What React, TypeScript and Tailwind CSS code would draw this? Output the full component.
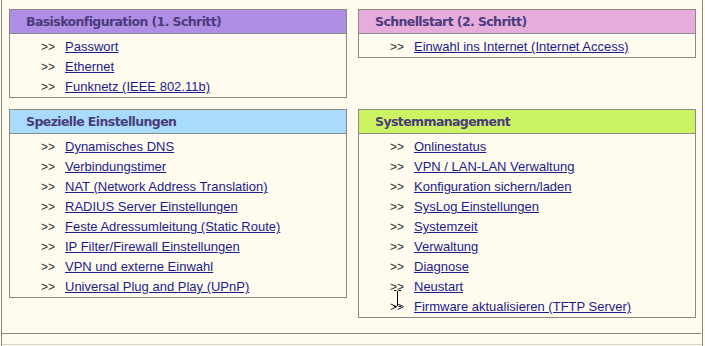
const sections = [
  {
    title: "Basiskonfiguration (1. Schritt)",
    head: "bg-[#b18ee6]",
    links: ["Passwort", "Ethernet", "Funknetz (IEEE 802.11b)"],
  },
  {
    title: "Schnellstart (2. Schritt)",
    head: "bg-[#e6acdc]",
    links: ["Einwahl ins Internet (Internet Access)"],
  },
  {
    title: "Spezielle Einstellungen",
    head: "bg-[#a8dcfa]",
    links: [
      "Dynamisches DNS",
      "Verbindungstimer",
      "NAT (Network Address Translation)",
      "RADIUS Server Einstellungen",
      "Feste Adressumleitung (Static Route)",
      "IP Filter/Firewall Einstellungen",
      "VPN und externe Einwahl",
      "Universal Plug and Play (UPnP)",
    ],
  },
  {
    title: "Systemmanagement",
    head: "bg-[#ccf462]",
    links: [
      "Onlinestatus",
      "VPN / LAN-LAN Verwaltung",
      "Konfiguration sichern/laden",
      "SysLog Einstellungen",
      "Systemzeit",
      "Verwaltung",
      "Diagnose",
      "Neustart",
      "Firmware aktualisieren (TFTP Server)",
    ],
  },
];

function Box({ title, head, links }: { title: string; head: string; links: string[] }) {
  return (
    <div className="border border-[#8c8a80] bg-[#fffbef] self-start">
      <div
        className={`${head} h-[24px] border-b border-[#8c8a80] pl-[16px] pt-[1px] flex items-center text-[12.5px] font-bold tracking-[-0.6px] text-[#4a3c7c] shadow-[0_1px_0_#ffffff]`}
        style={{ fontFamily: '"DejaVu Sans", Verdana, sans-serif' }}
      >
        {title}
      </div>
      <ul className="pt-[3px]">
        {links.map((l) => (
          <li key={l} className="h-[20px] flex items-center pl-[31px]">
            <span className="w-[24px] text-[12px] text-[#333333]">&gt;&gt;</span>
            <a href="#" className="text-[13px] text-[#1c1c8c] underline">
              {l}
            </a>
          </li>
        ))}
      </ul>
    </div>
  );
}

export default function App() {
  return (
    <div
      className="relative w-[705px] h-[346px] bg-[#fffbef] overflow-hidden"
      style={{ fontFamily: '"Liberation Sans", Arial, sans-serif' }}
    >
      <div className="ml-[1px] mr-[2px] h-full border-l border-r border-[#8c8a80] flex flex-col">
        <div className="grid grid-cols-[338px_338px] content-start gap-x-[11px] gap-y-[11px] pl-[7px] pt-[9px] h-[333px] shrink-0 items-start">
          {sections.map((s) => (
            <Box key={s.title} {...s} />
          ))}
        </div>
        <div className="border-t border-[#8c8a80] mr-[1px] h-[11px] shrink-0" />
        <div className="border-t border-[#d8d4c8] flex-1" />
      </div>
      {/* text cursor */}
      <svg className="absolute left-[394px] top-[290px]" width="7" height="17" viewBox="0 0 7 17">
        <path d="M0 0.5h2.5M4.5 0.5H7M3.5 1v15M0 16.5h2.5M4.5 16.5H7" stroke="#000" strokeWidth="1" fill="none" />
      </svg>
    </div>
  );
}
